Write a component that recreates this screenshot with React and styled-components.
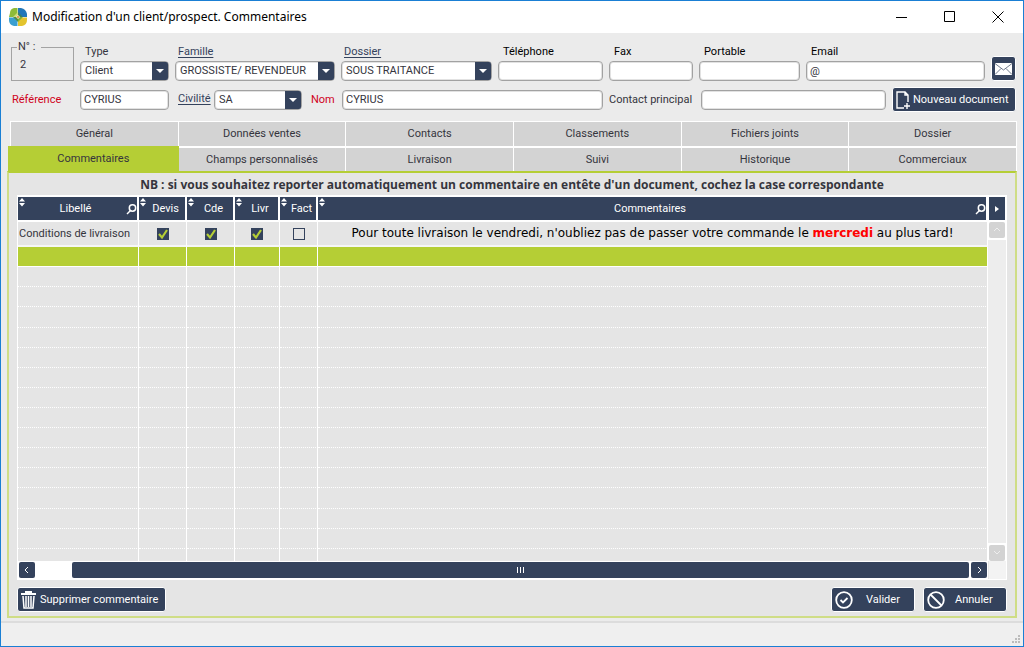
import React from "react";
import styled, { createGlobalStyle, css } from "styled-components";

const navy = "#34425c";
const lime = "#b5ce35";
const uiFont = 'Roboto, "Noto Sans", sans-serif';
const titleFont = '"Noto Sans", "Open Sans", sans-serif';
const noticeFont = '"Open Sans", "Noto Sans", sans-serif';
const wideFont = '"DejaVu Sans", sans-serif';

const GlobalStyle = createGlobalStyle`
  * { box-sizing: border-box; }
  body { margin: 0; font-family: ${uiFont}; font-size: 11px; line-height: 16px; color: #35353d; }
  button, input, select { font: inherit; color: inherit; }
  svg { flex: none; }
`;

const Window = styled.main`
  display: flex;
  flex-direction: column;
  min-height: 100vh;
  border: 1px solid #1a7fd4;
  background: #ebebeb;
`;

const TitleBar = styled.header`
  display: flex;
  align-items: center;
  height: 32px;
  padding: 0 1px 0 8px;
  background: #fff;
  color: #000;
`;

const Title = styled.h1`
  flex: 1;
  margin: 0 0 0 5px;
  font-family: ${titleFont};
  font-size: 12px;
  font-weight: 400;
`;

const CaptionButton = styled.button`
  display: grid;
  place-items: center;
  width: 48px;
  height: 30px;
  padding: 0;
  border: 0;
  background: none;
`;

const Form = styled.form`
  display: flex;
  flex: 1;
  flex-direction: column;
  padding: 8px 6px 3px;
`;

const FieldRow = styled.div`
  display: flex;
  align-items: ${(p) => (p.$center ? "center" : "flex-end")};
  gap: 6px;
  padding: 0 1px 0 4px;
  margin-bottom: ${(p) => (p.$center ? 9 : 6)}px;
`;

const NumberBox = styled.fieldset`
  width: 63px;
  height: 40px;
  margin: 0;
  padding: 4px 8px 0;
  border: 1px solid #a3a3a3;
`;

const NumberLegend = styled.legend`
  margin-left: -3px;
  padding: 0 6px 0 1px;
  line-height: 12px;
`;

const Field = styled.div`
  display: flex;
  flex-direction: column;
  flex: ${(p) => (p.$width ? `0 0 ${p.$width}px` : "1 1 0")};
  min-width: 0;
`;

const LinkedField = styled.div`
  display: flex;
  justify-content: space-between;
  flex: 0 0 127px;
`;

const Label = styled.label`
  padding-left: ${(p) => p.$indent ?? 5}px;
  line-height: 18px;
  white-space: nowrap;
  color: ${(p) => (p.$required ? "#d0021b" : p.$dark ? "#000" : "inherit")};
  ${(p) => p.$width && `flex: 0 0 ${p.$width}px;`}
`;

const FieldLink = styled.a`
  margin-left: 3px;
  line-height: 18px;
  color: ${navy};
  text-underline-offset: 2px;
`;

const control = css`
  width: 100%;
  height: 20px;
  border: 1px solid #a2a2a2;
  border-radius: 4px;
  background: #fff;
  box-shadow: inset 0 0 0 1px #e2e2e2;
  outline: 0;
`;

const Input = styled.input`
  ${control}
  flex: ${(p) => (p.$width ? `0 0 ${p.$width}px` : p.$fill ? "1 1 0" : "none")};
  min-width: 0;
  padding: 0 3px;
`;

const SelectBox = styled.div`
  position: relative;
  flex: ${(p) => (p.$width ? `0 0 ${p.$width}px` : "none")};
`;

const SelectInput = styled.select`
  ${control}
  display: block;
  padding: 0 17px 0 4px;
  appearance: none;
`;

const SelectArrow = styled.span`
  position: absolute;
  top: 1px;
  right: 1px;
  bottom: 1px;
  display: grid;
  place-items: center;
  width: 16px;
  background: ${navy};
  border-radius: 0 2px 2px 0;
  pointer-events: none;
`;

const ActionButton = styled.button`
  display: flex;
  align-items: center;
  gap: ${(p) => p.$gap ?? 4}px;
  flex: none;
  height: 25px;
  width: ${(p) => (p.$width ? `${p.$width}px` : "auto")};
  padding: 0 3px;
  border: 1px solid #fff;
  border-radius: 3px;
  background: ${navy};
  color: #fff;
  white-space: nowrap;
`;

const TabGrid = styled.nav`
  display: grid;
  grid-template-columns: repeat(6, 1fr);
  grid-template-rows: 24px 23px;
  gap: 2px 1px;
  margin-left: 3px;
  padding: 1px 1px 0;
  background: #fff;
`;

const Tab = styled.button`
  padding: 0;
  border: 0;
  background: #d3d3d3;
  ${(p) =>
    p.$active &&
    css`
      margin: -2px -1px 0 -3px;
      background: ${lime};
    `}
`;

const Panel = styled.section`
  display: flex;
  flex: 1;
  flex-direction: column;
  padding: 4px 8px 4px;
  border: 2px solid #cfdd86;
  border-top-color: ${lime};
  background: #e5e5e5;
`;

const Notice = styled.p`
  margin: 0 0 2px;
  text-align: center;
  font-family: ${noticeFont};
  font-size: 12px;
  font-weight: 700;
`;

const GridFrame = styled.div`
  display: grid;
  flex: 1;
  grid-template-columns: minmax(0, 1fr) 18px;
  grid-template-rows: 1fr 18px;
  border: 1px solid #fff;
  border-top-width: 2px;
`;

const Table = styled.table`
  width: 100%;
  border-collapse: separate;
  border-spacing: 0;
  table-layout: fixed;
`;

const HeadCell = styled.th`
  position: relative;
  height: 25px;
  padding: 0 ${(p) => (p.$search ? 4 : 2)}px 0 ${(p) => (p.$search ? 0 : 9)}px;
  border-right: 2px solid #fff;
  border-bottom: 2px solid #fff;
  background: ${navy};
  color: #fff;
  font-weight: 400;
`;

const SortMark = styled.svg`
  position: absolute;
  top: 1px;
  left: 1px;
`;

const SearchMark = styled.svg`
  position: absolute;
  top: 7px;
  right: 0;
`;

const BodyRow = styled.tr`
  height: 20px;
  background: ${(p) => (p.$selected ? lime : "#e5e5e5")};
  &:first-child { height: 25px; }
  &:last-child { height: 12px; }
`;

const Cell = styled.td`
  padding: 0 1px;
  border-right: 1px solid #fff;
  border-bottom: 1px dotted #fff;
  text-align: ${(p) => (p.$center ? "center" : "left")};
  white-space: nowrap;
  overflow: hidden;
  ${BodyRow}:first-child & { border-bottom: 2px solid #f6f6f6; }
  ${BodyRow}:nth-child(2) & { border-bottom: 1px solid #fff; }
  ${BodyRow}:last-child & { border-bottom: 0; }
`;

const Comment = styled.span`
  font-family: ${wideFont};
  font-size: 12px;
  color: #000;
`;

const Highlight = styled.strong`
  color: #f00;
`;

const Check = styled.span`
  position: relative;
  display: block;
  width: 12px;
  height: 12px;
  margin: 0 auto;
  svg { position: absolute; inset: 0; pointer-events: none; }
`;

const CheckInput = styled.input`
  display: block;
  width: 12px;
  height: 12px;
  margin: 0;
  border: 1px solid ${navy};
  appearance: none;
  &:checked { background: ${navy}; }
`;

const VerticalBar = styled.div`
  display: flex;
  flex-direction: column;
  align-items: center;
  gap: 2px;
  background: #fff;
`;

const Track = styled.div`
  flex: 1;
  width: 18px;
  background: #ededed;
`;

const ScrollButton = styled.button`
  display: grid;
  place-items: center;
  flex: none;
  width: 16px;
  height: ${(p) => p.$height ?? 16}px;
  padding: 0;
  border: 0;
  border-radius: ${(p) => (p.$height ? 0 : 2)}px;
  background: ${(p) => (p.$muted ? "#d3d3d3" : navy)};
`;

const HorizontalBar = styled.div`
  display: flex;
  align-items: center;
  gap: 2px;
  padding: 0 1px;
  background: #fff;
`;

const Thumb = styled.div`
  display: grid;
  place-items: center;
  flex: 1;
  height: 16px;
  margin-left: 35px;
  border-radius: 2px;
  background: ${navy};
`;

const Corner = styled.div`
  margin: 0 0 0 1px;
  background: #f3f3f3;
`;

const Footer = styled.footer`
  display: flex;
  gap: 8px;
  margin-top: 7px;
`;

const Spacer = styled.div`
  flex: 1;
`;

const StatusBar = styled.footer`
  display: flex;
  align-items: flex-end;
  justify-content: flex-end;
  height: 25px;
  padding: 1px 2px;
  border-top: 2px solid #dcdcdc;
  background: #efefef;
`;

function Logo() {
  return (
    <svg width="18" height="18" viewBox="0 0 18 18">
      <path d="M8.500 0H5Q1 1 1 5L0 9h6l2.500-3z" fill="#8dbb38" />
      <path d="M9 0h3q5 1 6 6v3h-6L9 6z" fill="#2277b8" />
      <path d="M0 9.500h6L8.500 12v6H5q-5-1-5-6z" fill="#3a9fd0" />
      <path d="M18 9.500h-6L9 12v6h4q5-1 5-6z" fill="#e3c42e" />
      <path d="M9 4v5H4z" fill="#cddc7a" />
      <path d="M9 4l5 5H9z" fill="#3d7f60" />
      <path d="M4 9h5v5z" fill="#4f8f4a" />
      <path d="M14 9l-5 5V9z" fill="#7fae35" />
      <path d="M9 7l1 1 1 1-1 1-1 1-1-1-1-1 1-1z" fill="#fff3d0" />
      <circle cx="9" cy="9" r="1" fill="#d9822b" />
    </svg>
  );
}

function DropDown({ id, label, value, width }) {
  return (
    <SelectBox $width={width}>
      <SelectInput id={id} aria-label={label} defaultValue={value}>
        <option>{value}</option>
      </SelectInput>
      <SelectArrow>
        <svg width="8" height="4"><path d="M0 0h8L4 4z" fill="#fff" /></svg>
      </SelectArrow>
    </SelectBox>
  );
}

function Chevron({ d, color = "#fff" }) {
  return (
    <svg width="8" height="8" viewBox="0 0 8 8" fill="none" stroke={color}>
      <path d={d} />
    </svg>
  );
}

function Header({ children, search }) {
  return (
    <HeadCell $search={search} scope="col">
      <SortMark width="6" height="9" viewBox="0 0 6 9">
        <path d="M3 0l3 3.500H0zM0 5h6L3 8.500z" fill="#fff" />
      </SortMark>
      {children}
      {search && (
        <SearchMark width="11" height="11" viewBox="0 0 11 11" fill="none" stroke="#fff" strokeWidth="1.5">
          <circle cx="6.500" cy="4" r="3.200" />
          <path d="M4.500 6.500L1 10" />
        </SearchMark>
      )}
    </HeadCell>
  );
}

function CheckBox({ label, checked }) {
  return (
    <Check>
      <CheckInput type="checkbox" aria-label={label} defaultChecked={checked} />
      {checked && (
        <svg width="12" height="12" viewBox="0 0 12 12" fill="none" stroke={lime} strokeWidth="2.200">
          <path d="M2 6L5 9.500L10 2" />
        </svg>
      )}
    </Check>
  );
}

const tabs = [
  "Général", "Données ventes", "Contacts", "Classements", "Fichiers joints", "Dossier",
  "Commentaires", "Champs personnalisés", "Livraison", "Suivi", "Historique", "Commerciaux",
];
const flags = [["Devis", true], ["Cde", true], ["Livr", true], ["Fact", false]];
const emptyRows = Array.from({ length: 16 }, (_, i) => i);

export default function App() {
  return (
    <>
      <GlobalStyle />
      <Window>
        <TitleBar>
          <Logo />
          <Title>Modification d'un client/prospect. Commentaires</Title>
          <CaptionButton type="button" aria-label="Réduire">
            <svg width="12" height="12" stroke="#000"><path d="M0 6.500h11" /></svg>
          </CaptionButton>
          <CaptionButton type="button" aria-label="Agrandir">
            <svg width="12" height="12" stroke="#000" fill="none"><path d="M.5 .5h10v10H.5z" /></svg>
          </CaptionButton>
          <CaptionButton type="button" aria-label="Fermer">
            <svg width="12" height="12" stroke="#000"><path d="M.5 .5l11 11M11.500 .5l-11 11" /></svg>
          </CaptionButton>
        </TitleBar>

        <Form onSubmit={(e) => e.preventDefault()}>
          <FieldRow>
            <NumberBox>
              <NumberLegend>N° :</NumberLegend>
              2
            </NumberBox>
            <Field $width={89}>
              <Label htmlFor="type">Type</Label>
              <DropDown id="type" value="Client" />
            </Field>
            <Field $width={160}>
              <FieldLink href="#famille">Famille</FieldLink>
              <DropDown label="Famille" value="GROSSISTE/ REVENDEUR" />
            </Field>
            <Field $width={151}>
              <FieldLink href="#dossier">Dossier</FieldLink>
              <DropDown label="Dossier" value="SOUS TRAITANCE" />
            </Field>
            <Field $width={105}>
              <Label $dark htmlFor="tel">Téléphone</Label>
              <Input id="tel" />
            </Field>
            <Field $width={84}>
              <Label $dark htmlFor="fax">Fax</Label>
              <Input id="fax" />
            </Field>
            <Field $width={101}>
              <Label $dark htmlFor="portable">Portable</Label>
              <Input id="portable" />
            </Field>
            <Field>
              <Label $dark htmlFor="email">Email</Label>
              <Input id="email" defaultValue="@" />
            </Field>
            <ActionButton type="button" $width={25} aria-label="Envoyer un email">
              <svg width="17" height="12" viewBox="0 0 17 12">
                <path d="M0 0h17v12H0z" fill="#fff" />
                <path d="M0 .5l8.500 6.500L17 .5M0 11.500l6-6M17 11.500l-6-6" fill="none" stroke={navy} strokeWidth=".7" />
              </svg>
            </ActionButton>
          </FieldRow>

          <FieldRow $center>
            <Label $indent={1} $required $width={63} htmlFor="ref">Référence</Label>
            <Input $width={89} id="ref" defaultValue="CYRIUS" />
            <LinkedField>
              <FieldLink href="#civilite">Civilité</FieldLink>
              <DropDown label="Civilité" value="SA" width={88} />
            </LinkedField>
            <Label $required $indent={3} $width={28} htmlFor="nom">Nom</Label>
            <Input $width={261} id="nom" defaultValue="CYRIUS" />
            <Label $indent={0} $width={86} htmlFor="contact">Contact principal</Label>
            <Input $fill id="contact" />
            <ActionButton type="button" $width={124} $gap={2}>
              <svg width="15" height="18" viewBox="0 0 15 18" fill="none" stroke="#fff" strokeWidth="1.400">
                <path d="M8 17H1V1h8l3 3v7M9 1v3h3M11 12v6M8 15h6" />
              </svg>
              Nouveau document
            </ActionButton>
          </FieldRow>

          <TabGrid>
            {tabs.map((t) => (
              <Tab type="button" key={t} $active={t === "Commentaires"}>{t}</Tab>
            ))}
          </TabGrid>

          <Panel>
            <Notice>
              NB : si vous souhaitez reporter automatiquement un commentaire en entête d'un document, cochez la case correspondante
            </Notice>
            <GridFrame>
              <Table>
                <colgroup>
                  <col width="121" /><col width="48" /><col width="48" /><col width="45" /><col width="38" /><col />
                </colgroup>
                <thead>
                  <tr>
                    <Header search>Libellé</Header>
                    {flags.map(([name]) => <Header key={name}>{name}</Header>)}
                    <Header search>Commentaires</Header>
                  </tr>
                </thead>
                <tbody>
                  <BodyRow>
                    <Cell>Conditions de livraison</Cell>
                    {flags.map(([name, on]) => (
                      <Cell $center key={name}><CheckBox label={name} checked={on} /></Cell>
                    ))}
                    <Cell $center>
                      <Comment>
                        Pour toute livraison le vendredi, n'oubliez pas de passer votre commande le <Highlight>mercredi</Highlight> au plus tard!
                      </Comment>
                    </Cell>
                  </BodyRow>
                  {emptyRows.map((i) => (
                    <BodyRow key={i} $selected={i === 0}>
                      <Cell /><Cell /><Cell /><Cell /><Cell /><Cell />
                    </BodyRow>
                  ))}
                </tbody>
              </Table>
              <VerticalBar>
                <ScrollButton type="button" $height={23} aria-label="Colonnes">
                  <svg width="4" height="6"><path d="M0 0l4 3-4 3z" fill="#fff" /></svg>
                </ScrollButton>
                <ScrollButton type="button" $muted aria-label="Monter"><Chevron d="M1 5l3-3 3 3" color="#eee" /></ScrollButton>
                <Track />
                <ScrollButton type="button" $muted aria-label="Descendre"><Chevron d="M1 2l3 3 3-3" color="#eee" /></ScrollButton>
              </VerticalBar>
              <HorizontalBar>
                <ScrollButton type="button" aria-label="Gauche"><Chevron d="M5 1L2 4l3 3" /></ScrollButton>
                <Thumb>
                  <svg width="8" height="6" stroke="#fff"><path d="M.5 0v6M3.500 0v6M6.500 0v6" /></svg>
                </Thumb>
                <ScrollButton type="button" aria-label="Droite"><Chevron d="M3 1l3 3-3 3" /></ScrollButton>
              </HorizontalBar>
              <Corner />
            </GridFrame>
            <Footer>
              <ActionButton type="button" $width={149}>
                <svg width="15" height="18" viewBox="0 0 15 18" fill="none" stroke="#fff">
                  <path d="M0 3h15M5 2V1h5v1" strokeWidth="2" />
                  <path d="M2 5l1 12h9l1-12" strokeWidth="1.500" />
                  <path d="M5 5v11M7.500 5v11M10 5v11" strokeWidth="1.500" />
                </svg>
                Supprimer commentaire
              </ActionButton>
              <Spacer />
              <ActionButton type="button" $width={84} $gap={13}>
                <svg width="18" height="18" viewBox="0 0 18 18" fill="none" stroke="#fff" strokeWidth="1.800">
                  <circle cx="9" cy="9" r="7.800" /><path d="M5.500 9l2.500 2.500 4.500-4.500" />
                </svg>
                Valider
              </ActionButton>
              <ActionButton type="button" $width={84} $gap={10}>
                <svg width="18" height="18" viewBox="0 0 18 18" fill="none" stroke="#fff" strokeWidth="1.800">
                  <circle cx="9" cy="9" r="7.800" /><path d="M3.500 3.500l11 11" />
                </svg>
                Annuler
              </ActionButton>
            </Footer>
          </Panel>
        </Form>

        <StatusBar>
          <svg width="10" height="10" fill="#bcbcbc">
            <path d="M7 0h2v2H7zM4 3h2v2H4zM7 3h2v2H7zM1 6h2v2H1zM4 6h2v2H4zM7 6h2v2H7z" />
          </svg>
        </StatusBar>
      </Window>
    </>
  );
}
